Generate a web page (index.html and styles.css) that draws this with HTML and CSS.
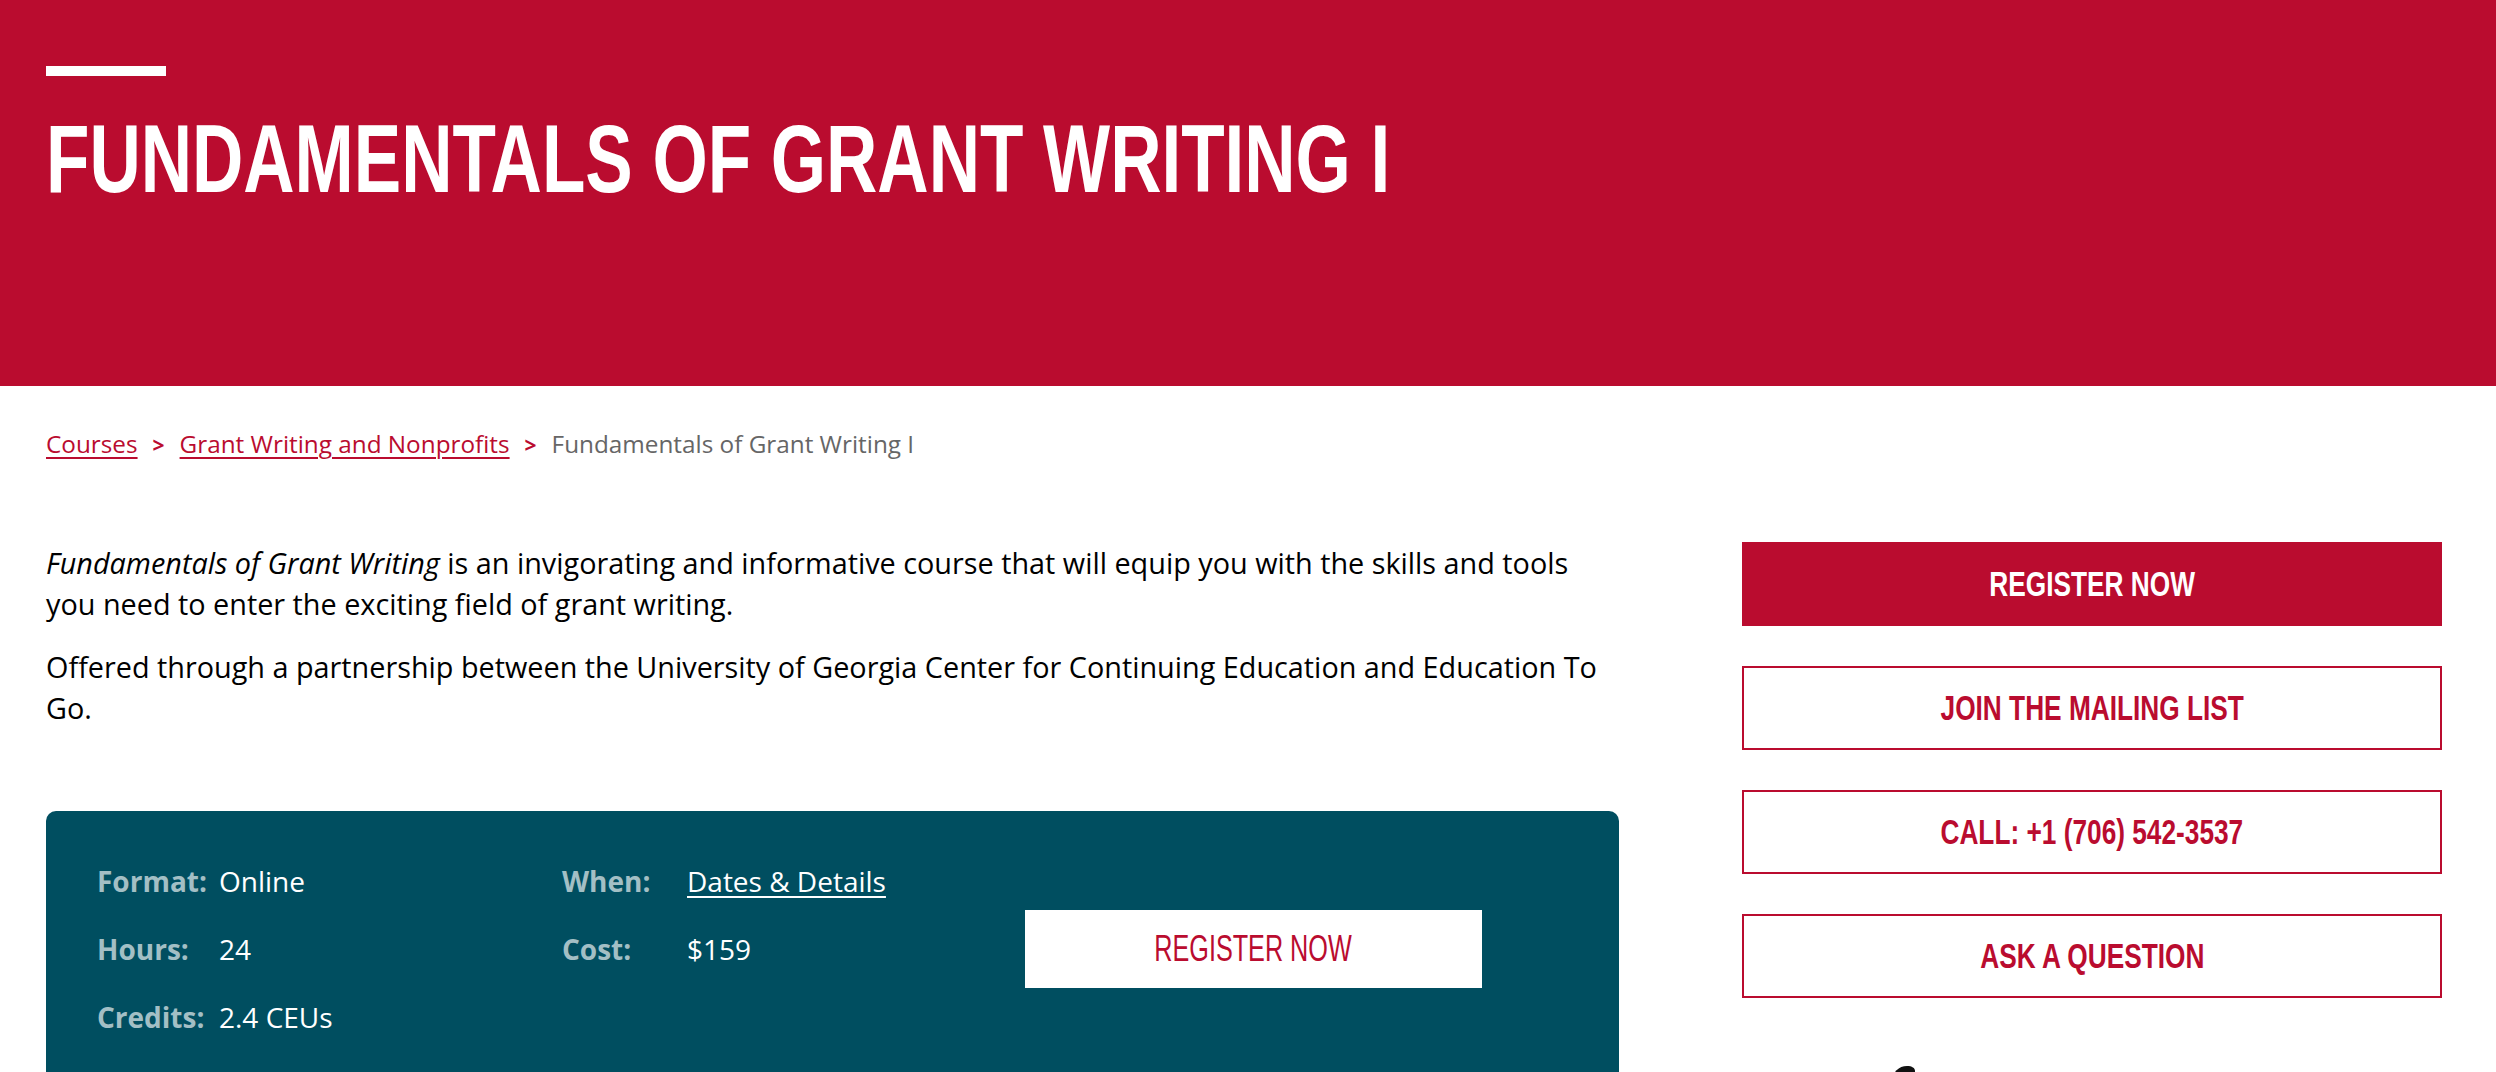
FILE: index.html
```html
<!DOCTYPE html>
<html lang="en">
<head>
<meta charset="utf-8">
<title>Fundamentals of Grant Writing I</title>
<link rel="stylesheet" href="styles.css">
</head>
<body>
<header class="hero">
  <span class="hero-rule"></span>
  <h1 class="hero-title"><span class="cond-title">Fundamentals of Grant Writing I</span></h1>
</header>
<div class="page">
  <nav class="crumbs">
    <a href="#">Courses</a><span class="sep">&gt;</span><a href="#">Grant Writing and Nonprofits</a><span class="sep">&gt;</span><span class="current">Fundamentals of Grant Writing I</span>
  </nav>
  <div class="layout">
    <main class="main">
      <p><em>Fundamentals of Grant Writing</em> is an invigorating and informative course that will equip you with the skills and tools you need to enter the exciting field of grant writing.</p>
      <p>Offered through a partnership between the University of Georgia Center for Continuing Education and Education To Go.</p>
      <section class="facts">
        <dl class="fact-col fact-col-a">
          <dt>Format:</dt><dd>Online</dd>
          <dt>Hours:</dt><dd>24</dd>
          <dt>Credits:</dt><dd>2.4 CEUs</dd>
        </dl>
        <dl class="fact-col fact-col-b">
          <dt>When:</dt><dd><a href="#">Dates &amp; Details</a></dd>
          <dt>Cost:</dt><dd>$159</dd>
        </dl>
        <div class="fact-action"><a class="btn-white" href="#"><span class="cond-light">Register Now</span></a></div>
      </section>
    </main>
    <aside class="side">
      <a class="side-btn primary" href="#"><span class="cond">Register Now</span></a>
      <a class="side-btn" href="#"><span class="cond">Join the Mailing List</span></a>
      <a class="side-btn" href="#"><span class="cond">Call: +1 (706) 542-3537</span></a>
      <a class="side-btn" href="#"><span class="cond">Ask a Question</span></a>
      <div class="side-logo">
        <svg width="700" height="40" viewBox="0 0 700 40" aria-hidden="true"><path d="M150 40 L150 16 C150 6 157 0 165 0 C170 0 173 2 173 5 L173 40 Z" fill="#111"/></svg>
      </div>
    </aside>
  </div>
</div>
</body>
</html>
```

FILE: styles.css
```css
* { box-sizing: border-box; }
html, body { margin: 0; padding: 0; }
body {
  font-family: "Open Sans", "Noto Sans", sans-serif;
  color: #000;
  background: #fff;
}

.hero {
  background: #ba0c2f;
  height: 386px;
  padding: 66px 46px 0;
}
.hero-rule {
  display: block;
  width: 120px;
  height: 10px;
  background: #fff;
}
.hero-title {
  margin: 35px 0 0;
  font-family: "Liberation Sans", Arial, sans-serif;
  font-weight: 700;
  font-size: 96px;
  line-height: 96px;
  color: #fff;
  text-transform: uppercase;
  white-space: nowrap;
}
.cond-title {
  display: inline-block;
  transform: scaleX(0.74);
  transform-origin: left center;
}

.page { padding: 0 54px 0 46px; }

.crumbs {
  padding-top: 40px;
  font-size: 24.3px;
  line-height: 36px;
}
.crumbs a {
  color: #ba0c2f;
  text-decoration: underline;
  text-decoration-thickness: 2px;
  text-underline-offset: 4px;
}
.sep {
  color: #ba0c2f;
  font-weight: 700;
  font-size: 21px;
  margin: 0 15px;
}
.current { color: #666; }

.layout {
  display: grid;
  grid-template-columns: 1fr 700px;
  column-gap: 123px;
  margin-top: 79px;
  align-items: start;
}

.main p {
  margin: 0 0 21px;
  font-size: 28.8px;
  line-height: 41.4px;
  font-weight: 500;
}

.facts {
  margin-top: 82px;
  background: #004e60;
  border-radius: 10px;
  padding: 50px 51px 51px;
  display: grid;
  grid-template-columns: 465px 463px 457px;
  align-items: start;
}
.fact-col {
  margin: 0;
  display: grid;
  row-gap: 27px;
  font-size: 28px;
  line-height: 41px;
}
.fact-col-a { grid-template-columns: 122px auto; }
.fact-col-b { grid-template-columns: 125px auto; }
.fact-col dt {
  font-weight: 700;
  color: #a3bfc5;
}
.fact-col dd {
  margin: 0;
  color: #fff;
  font-weight: 500;
}
.fact-col dd a {
  color: #fff;
  text-decoration: underline;
  text-decoration-thickness: 2px;
  text-underline-offset: 4px;
}
.fact-action { align-self: center; }
.btn-white {
  display: flex;
  align-items: center;
  justify-content: center;
  height: 78px;
  background: #fff;
  color: #ba0c2f;
  font-family: "Liberation Sans", Arial, sans-serif;
  font-size: 36px;
  text-transform: uppercase;
  text-decoration: none;
  white-space: nowrap;
}
.cond-light {
  display: inline-block;
  transform: scaleX(0.7);
}

.side {
  display: flex;
  flex-direction: column;
  gap: 40px;
}
.side-btn {
  display: flex;
  align-items: center;
  justify-content: center;
  height: 84px;
  border: 2px solid #ba0c2f;
  color: #ba0c2f;
  font-family: "Liberation Sans", Arial, sans-serif;
  font-weight: 700;
  font-size: 35px;
  text-transform: uppercase;
  text-decoration: none;
  white-space: nowrap;
}
.side-btn.primary {
  background: #ba0c2f;
  color: #fff;
}
.cond {
  display: inline-block;
  transform: scaleX(0.75);
}
.side-logo {
  margin-top: 28px;
  height: 40px;
}
.side-logo svg { display: block; }
```
